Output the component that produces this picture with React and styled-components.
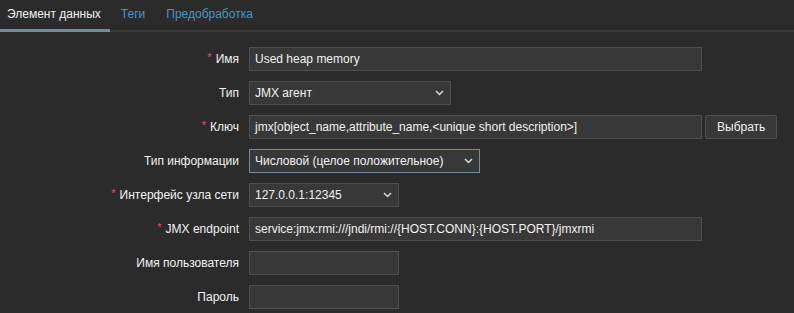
import styled, { createGlobalStyle } from 'styled-components';

const GlobalStyle = createGlobalStyle`
  html, body {
    margin: 0;
    padding: 0;
    background: #2b2b2b;
  }
  body {
    font-family: "Liberation Sans", Arial, sans-serif;
    font-size: 12px;
    color: #f2f2f2;
  }
`;

const Page = styled.div`
  width: 794px;
  height: 313px;
  overflow: hidden;
  background: #2b2b2b;
`;

const TabBar = styled.div`
  display: flex;
  align-items: flex-start;
  height: 30px;
  border-bottom: 2px solid #383838;
`;

const Tab = styled.div`
  height: 29px;
  line-height: 29px;
  padding: ${(p) => (p.$first ? '0 9px 0 7px' : '0 10px 0 11px')};
  color: ${(p) => (p.$active ? '#f2f2f2' : '#4796c4')};
  border-bottom: 3px solid ${(p) => (p.$active ? '#768d99' : 'transparent')};
  white-space: nowrap;
`;

const Form = styled.div`
  display: grid;
  grid-template-columns: 239px 1fr;
  column-gap: 10px;
  row-gap: 10px;
  padding-top: 15px;
`;

const Label = styled.div`
  height: 24px;
  line-height: 24px;
  text-align: right;
  white-space: nowrap;
`;

const Star = styled.span`
  color: #e45959;
  font-size: 11px;
  position: relative;
  top: -2px;
  margin-right: 4px;
`;

const Field = styled.div`
  display: flex;
  align-items: center;
  gap: 3px;
  height: 24px;
`;

const Input = styled.div`
  box-sizing: border-box;
  width: ${(p) => p.$w}px;
  height: 24px;
  line-height: 22px;
  padding: 0 5px;
  background: #383838;
  border: 1px solid #4f4f4f;
  white-space: nowrap;
  overflow: hidden;
`;

const Select = styled.div`
  box-sizing: border-box;
  width: ${(p) => p.$w}px;
  height: 24px;
  padding: 0 5px;
  display: flex;
  align-items: center;
  justify-content: space-between;
  background: #383838;
  border: 1px solid ${(p) => (p.$focus ? '#768d99' : '#4f4f4f')};
  white-space: nowrap;
`;

const Button = styled.div`
  box-sizing: border-box;
  height: 24px;
  line-height: 22px;
  padding: 0 11px;
  background: #383838;
  border: 1px solid #4f4f4f;
  border-radius: 2px;
`;

const Chevron = () => (
  <svg width="9" height="6" viewBox="0 0 9 6" style={{ marginRight: 1 }}>
    <polyline points="1,1 4.5,4.5 8,1" fill="none" stroke="#d8d8d8" strokeWidth="1.5" />
  </svg>
);

const Row = ({ label, req, children }) => (
  <>
    <Label>
      {req && <Star>*</Star>}
      {label}
    </Label>
    <Field>{children}</Field>
  </>
);

const App = () => {
  return (
    <Page>
      <GlobalStyle />
      <TabBar>
        <Tab $active $first>Элемент данных</Tab>
        <Tab>Теги</Tab>
        <Tab>Предобработка</Tab>
      </TabBar>
      <Form>
        <Row label="Имя" req>
          <Input $w={453}>Used heap memory</Input>
        </Row>
        <Row label="Тип">
          <Select $w={202}>
            <span>JMX агент</span>
            <Chevron />
          </Select>
        </Row>
        <Row label="Ключ" req>
          <Input $w={453}>jmx[object_name,attribute_name,&lt;unique short description&gt;]</Input>
          <Button>Выбрать</Button>
        </Row>
        <Row label="Тип информации">
          <Select $w={231} $focus>
            <span>Числовой (целое положительное)</span>
            <Chevron />
          </Select>
        </Row>
        <Row label="Интерфейс узла сети" req>
          <Select $w={150}>
            <span>127.0.0.1:12345</span>
            <Chevron />
          </Select>
        </Row>
        <Row label="JMX endpoint" req>
          <Input $w={453}>service:jmx:rmi:///jndi/rmi://{'{HOST.CONN}'}:{'{HOST.PORT}'}/jmxrmi</Input>
        </Row>
        <Row label="Имя пользователя">
          <Input $w={150} />
        </Row>
        <Row label="Пароль">
          <Input $w={150} />
        </Row>
      </Form>
    </Page>
  );
};

export default App;
